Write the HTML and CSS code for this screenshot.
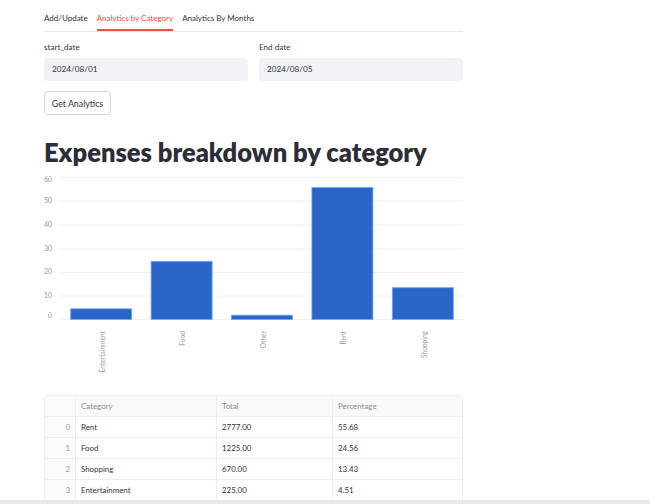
FILE: index.html
```html
<!DOCTYPE html>
<html lang="en">

<head>
    <meta charset="UTF-8">
    <meta name="viewport" content="width=device-width, initial-scale=1.0">
    <title>Expense Tracker</title>
    <link rel="stylesheet" href="styles.css">
</head>

<body>
    <div class="main">
        <!-- tabs -->
        <div class="tabs">
            <span class="tab">Add/Update</span>
            <span class="tab active">Analytics by Category</span>
            <span class="tab">Analytics By Months</span>
        </div>

        <!-- date inputs -->
        <div class="dates">
            <div class="field">
                <div class="label">start_date</div>
                <div class="input">2024/08/01</div>
            </div>
            <div class="field">
                <div class="label">End date</div>
                <div class="input">2024/08/05</div>
            </div>
        </div>

        <button class="btn">Get Analytics</button>

        <h1 class="title">Expenses breakdown by category</h1>

        <!-- bar chart -->
        <svg class="chart" width="430" height="210" viewBox="0 0 430 210">
            <g class="grid">
                <line x1="16" y1="8.3" x2="419" y2="8.3" />
                <line x1="16" y1="32" x2="419" y2="32" />
                <line x1="16" y1="56" x2="419" y2="56" />
                <line x1="16" y1="80" x2="419" y2="80" />
                <line x1="16" y1="103.5" x2="419" y2="103.5" />
                <line x1="16" y1="127" x2="419" y2="127" />
                <line x1="16" y1="150.5" x2="419" y2="150.5" />
            </g>
            <g class="ylab">
                <text x="8" y="11">60</text>
                <text x="8" y="32.5">50</text>
                <text x="8" y="56">40</text>
                <text x="8" y="80">30</text>
                <text x="8" y="103">20</text>
                <text x="8" y="127">10</text>
                <text x="8" y="147.5">0</text>
            </g>
            <g class="bars">
                <rect x="26.7" y="139.8" width="61" height="10.7" />
                <rect x="107.1" y="92.3" width="61" height="58.2" />
                <rect x="187.5" y="146.2" width="61" height="4.3" />
                <rect x="267.9" y="18.5" width="61" height="132" />
                <rect x="348.3" y="118.7" width="61" height="31.8" />
            </g>
            <g class="xlab">
                <text transform="translate(60.5,162) rotate(-90)">Entertainment</text>
                <text transform="translate(141,162) rotate(-90)">Food</text>
                <text transform="translate(221.5,162) rotate(-90)">Other</text>
                <text transform="translate(302,162) rotate(-90)">Rent</text>
                <text transform="translate(382.5,162) rotate(-90)">Shopping</text>
            </g>
        </svg>

        <!-- dataframe -->
        <table class="frame">
            <thead>
                <tr>
                    <th class="idx"></th>
                    <th class="c1">Category</th>
                    <th class="c2">Total</th>
                    <th class="c3">Percentage</th>
                </tr>
            </thead>
            <tbody>
                <tr>
                    <td class="idx">0</td>
                    <td>Rent</td>
                    <td>2777.00</td>
                    <td>55.68</td>
                </tr>
                <tr>
                    <td class="idx">1</td>
                    <td>Food</td>
                    <td>1225.00</td>
                    <td>24.56</td>
                </tr>
                <tr>
                    <td class="idx">2</td>
                    <td>Shopping</td>
                    <td>670.00</td>
                    <td>13.43</td>
                </tr>
                <tr>
                    <td class="idx">3</td>
                    <td>Entertainment</td>
                    <td>225.00</td>
                    <td>4.51</td>
                </tr>
                <tr class="hidden-row">
                    <td class="idx"></td>
                    <td></td>
                    <td></td>
                    <td></td>
                </tr>
            </tbody>
        </table>
    </div>

    <div class="hscroll"></div>
</body>

</html>
```

FILE: styles.css
```css
* {
    margin: 0;
    padding: 0;
    box-sizing: border-box;
}

html,
body {
    height: 504px;
    overflow: hidden;
}

body {
    background-color: #fff;
    font-family: Lato, "Liberation Sans", sans-serif;
    color: #31333f;
}

.main {
    width: 419px;
    margin-left: 44px;
}

/* tabs */
.tabs {
    display: flex;
    gap: 9px;
    height: 32px;
    padding-top: 12px;
    border-bottom: 1px solid #e6e7ea;
}

.tab {
    font-size: 8px;
    line-height: 12px;
    height: 19px;
    color: #31333f;
}

.tab.active {
    color: #ff4b4b;
    border-bottom: 2px solid #ff4b4b;
}

/* date inputs */
.dates {
    display: flex;
    gap: 11px;
    margin-top: 9px;
}

.field {
    flex: 1;
}

.label {
    font-size: 8.1px;
    line-height: 12px;
    height: 17px;
}

.input {
    height: 23px;
    line-height: 23px;
    padding-left: 8px;
    font-size: 8.2px;
    background-color: #f0f2f6;
    border-radius: 4px;
}

.btn {
    display: block;
    margin-top: 10px;
    width: 67px;
    height: 24px;
    font-family: inherit;
    font-size: 8.8px;
    color: #31333f;
    background-color: #fff;
    border: 1px solid #d6d6d9;
    border-radius: 4px;
}

.title {
    margin-top: 22px;
    font-size: 25.5px;
    line-height: 30px;
    font-weight: 800;
    color: #2b2d38;
}

/* chart */
.chart {
    display: block;
    margin-top: 2px;
    overflow: visible;
}

.grid line {
    stroke: #eef0f2;
    stroke-width: 1;
}

.ylab text {
    font-size: 7px;
    fill: #9a9aa0;
    text-anchor: end;
    dominant-baseline: middle;
}

.bars rect {
    fill: #2a66c8;
    stroke: #6fa6ee;
    stroke-width: 0.8;
}

.xlab text {
    font-size: 6.6px;
    fill: #9a9aa0;
    text-anchor: end;
}

/* dataframe */
.frame {
    margin-top: 16px;
    width: 419px;
    border-collapse: separate;
    border-spacing: 0;
    border: 1px solid #eceef1;
    border-radius: 4px 4px 0 0;
    font-size: 7.9px;
    table-layout: fixed;
}

.frame th,
.frame td {
    height: 21px;
    padding: 0 5px;
    text-align: left;
    border-bottom: 1px solid #eceef1;
    border-right: 1px solid #eceef1;
    white-space: nowrap;
}

.frame th:last-child,
.frame td:last-child {
    border-right: none;
}

.frame th {
    font-weight: 400;
    color: #8b8d95;
    background-color: #f8f9fb;
}

.frame td {
    color: #31333f;
}

.frame .idx {
    width: 31px;
    text-align: right;
    color: #9a9aa0;
    background-color: #fafbfc;
}

.frame .c1 {
    width: 141px;
}

.frame .c2 {
    width: 116px;
}

.hscroll {
    position: fixed;
    left: 0;
    right: 0;
    bottom: 0;
    height: 4px;
    background-color: #e8e8e8;
}
```
